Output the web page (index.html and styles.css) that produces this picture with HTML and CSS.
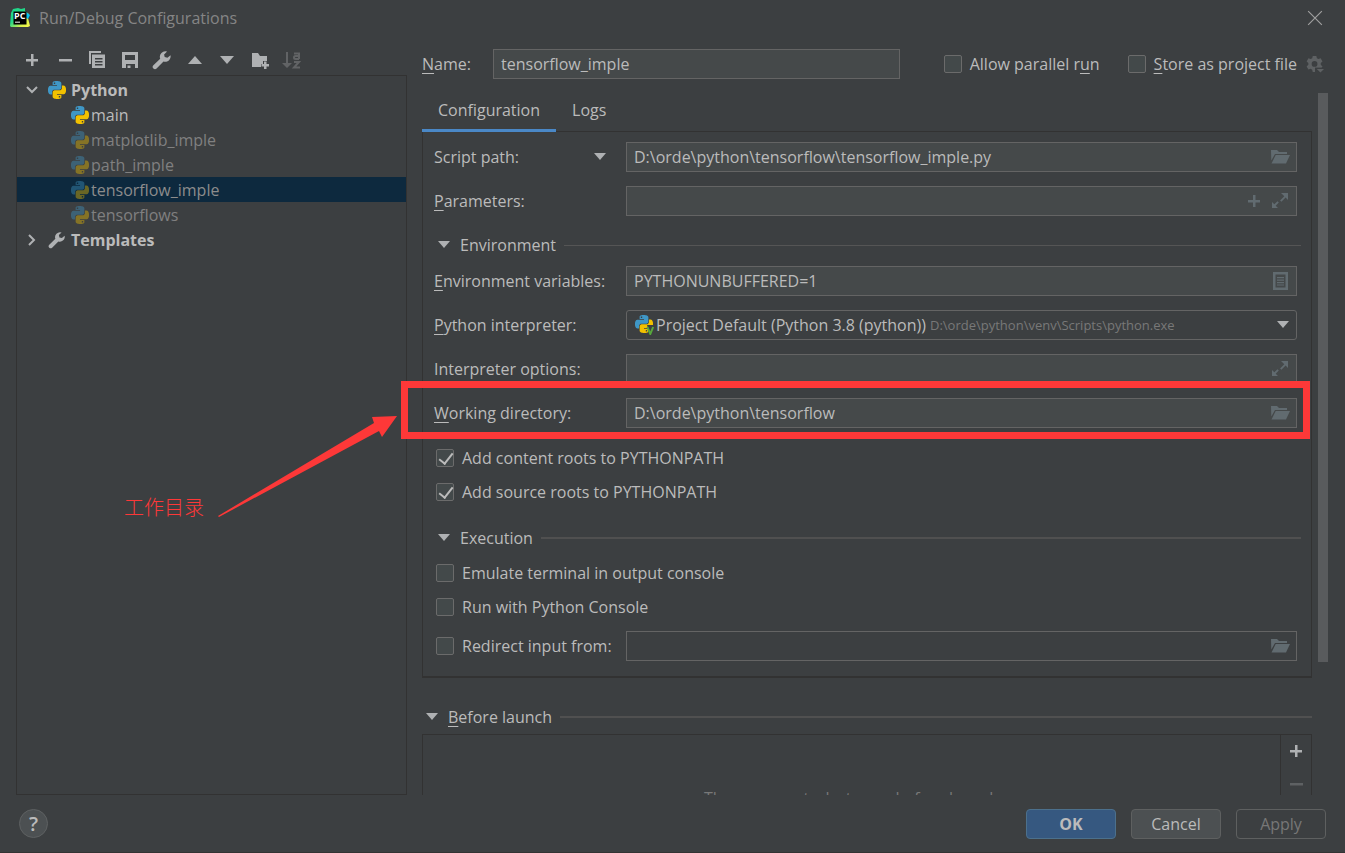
FILE: index.html
```html
<!DOCTYPE html>
<html lang="en">
<head>
<meta charset="utf-8">
<title>Run/Debug Configurations</title>
<link rel="stylesheet" href="styles.css">
</head>
<body>
<svg class="sprite" aria-hidden="true">
  <symbol id="python" viewBox="0 0 24 24">
    <path fill="#3f97c6" d="M14.25.18l.9.2.73.26.59.3.45.32.34.34.25.34.16.33.1.3.04.26.02.2-.01.13V8.5l-.05.63-.13.55-.21.46-.26.38-.3.31-.33.25-.35.19-.35.14-.33.1-.3.07-.26.04-.21.02H8.77l-.69.05-.59.14-.5.22-.41.27-.33.32-.27.35-.2.36-.15.37-.1.35-.07.32-.04.27-.02.21v3.06H3.17l-.21-.03-.28-.07-.32-.12-.35-.18-.36-.26-.36-.36-.35-.46-.32-.59-.28-.73-.21-.88-.14-1.05-.05-1.23.06-1.22.16-1.04.24-.87.32-.71.36-.57.4-.44.42-.33.42-.24.4-.16.36-.1.32-.05.24-.01h.16l.06.01h8.16v-.83H6.18l-.01-2.75-.02-.37.05-.34.11-.31.17-.28.25-.26.31-.23.38-.2.44-.18.51-.15.58-.12.64-.1.71-.06.77-.04.84-.02 1.27.05zm-6.3 1.98l-.23.33-.08.41.08.41.23.34.33.22.41.09.41-.09.33-.22.23-.34.08-.41-.08-.41-.23-.33-.33-.22-.41-.09-.41.09z"/>
    <path fill="#f2c100" d="M21.04 6.11l.28.06.32.12.35.18.36.27.36.35.35.47.32.59.28.73.21.88.14 1.04.05 1.23-.06 1.23-.16 1.04-.24.86-.32.71-.36.57-.4.45-.42.33-.42.24-.4.16-.36.09-.32.05-.24.02-.16-.01h-8.22v.82h5.84l.01 2.76.02.36-.05.34-.11.31-.17.29-.25.25-.31.24-.38.2-.44.17-.51.15-.58.13-.64.09-.71.07-.77.04-.84.01-1.27-.04-1.07-.14-.9-.2-.73-.25-.59-.3-.45-.33-.34-.34-.25-.34-.16-.33-.1-.3-.04-.25-.02-.2.01-.13v-5.34l.05-.64.13-.54.21-.46.26-.38.3-.32.33-.24.35-.2.35-.14.33-.1.3-.06.26-.04.21-.02.13-.01h5.84l.69-.05.59-.14.5-.21.41-.28.33-.32.27-.35.2-.36.15-.36.1-.35.07-.32.04-.28.02-.21V6.07h2.09l.14.01zm-6.47 14.25l-.23.33-.08.41.08.41.23.33.33.23.41.08.41-.08.33-.23.23-.33.08-.41-.08-.41-.23-.33-.33-.23-.41-.08-.41.08z"/>
  </symbol>
  <symbol id="plus" viewBox="0 0 20 20"><path d="M9 4h2.500v5H16v2.500h-4.500V16H9v-4.500H4V9h5z"/></symbol>
  <symbol id="minus" viewBox="0 0 20 20"><path d="M4 9h13v2.500H4z"/></symbol>
  <symbol id="wrench" viewBox="0 0 20 20"><path d="M18.500 5.200l-3.100 2.600-2.700-.700-.600-2.700 3-2.800a5.500 5.500 0 0 0-6.900 7.100L1.400 15.300a2.100 2.100 0 0 0 3.200 3.200l6.900-6.900a5.500 5.500 0 0 0 7-6.400z"/></symbol>
  <symbol id="down" viewBox="0 0 20 20"><path d="M4 6h12l-6 7z"/></symbol>
  <symbol id="folder" viewBox="0 0 20 20"><path d="M1 3h6l2 2h8v2H5L1.300 13.500z"/><path d="M5.700 8H20l-4 8.500H1.500z"/></symbol>
  <symbol id="expand" viewBox="0 0 20 20"><path d="M11 2h7v7l-2.400-2.400-4.200 4.200-1.300-1.300 4.200-4.200zM2 11l2.300 2.300 3.200-3.100 1.300 1.300-3.100 3.200L8 17H2z"/></symbol>
</svg>

<div class="dialog">
  <header class="titlebar">
    <svg class="logo" viewBox="0 0 20 20" aria-hidden="true">
      <defs><linearGradient id="pc" x1="0" y1="0" x2="1" y2="1"><stop offset="0.400" stop-color="#21d789"/><stop offset="0.750" stop-color="#d9f04b"/><stop offset="1" stop-color="#fcf84a"/></linearGradient></defs>
      <path fill="url(#pc)" d="M1 5l2-4 5-1 3 1 4-1v3l4 3-1 4 2 8-2 1H1l-1-1z"/>
      <path fill="#07c3f2" d="M16 4l4 3-2 4-2-1z"/>
      <path d="M3.500 3.500h13v13h-13z"/>
      <text x="4" y="11" class="logo-text">PC</text>
      <path fill="#aaaaaa" d="M5 13.500h5V15H5z"/>
    </svg>
    <h1 class="title">Run/Debug Configurations</h1>
    <button class="close" aria-label="Close"><svg viewBox="0 0 14 14" aria-hidden="true"><path d="M1 1l12 12M13 1L1 13"/></svg></button>
  </header>

  <main class="main">
    <aside class="sidebar">
      <div class="toolbar">
        <button aria-label="Add"><svg><use href="#plus"/></svg></button>
        <button aria-label="Remove"><svg><use href="#minus"/></svg></button>
        <button aria-label="Copy"><svg viewBox="0 0 20 20"><path d="M2 1h12v2H4v11H2z"/><path fill-rule="evenodd" d="M5 4.500h13V18H5zM8 8v1.500h7.500V8zm0 3v1.500h7.500V11zm0 3v1.500h7.500V14z"/></svg></button>
        <button aria-label="Save"><svg viewBox="0 0 20 20"><path fill-rule="evenodd" d="M2 2h16v16h-3v-4H6v4H2zm3 3v5h10V5z"/><path d="M7.500 15.500h3V18h-3z"/></svg></button>
        <button aria-label="Edit templates"><svg><use href="#wrench"/></svg></button>
        <button aria-label="Move up"><svg viewBox="0 0 20 20"><path d="M3 14h14l-7-8z"/></svg></button>
        <button aria-label="Move down"><svg viewBox="0 0 20 20"><path d="M3 6h14l-7 8z"/></svg></button>
        <button aria-label="Create folder"><svg viewBox="0 0 20 20"><path d="M2 3h6l2 3h7v5h-4v3h-2v3H2z"/><path d="M14 11.500h2.500V14H19v2.500h-2.500V19H14v-2.500h-2.500V14H14z"/></svg></button>
        <button aria-label="Sort" disabled><svg viewBox="0 0 20 20"><path d="M4 2h2v11h4l-5 5-5-5h4z"/><path class="stroke" d="M12 3.500h5V9M17 6h-3.500a1.500 1.500 0 0 0 0 3H17M12 12h5l-5 5.500h6"/></svg></button>
      </div>
      <ul class="tree">
        <li class="node root"><svg class="chevron" viewBox="0 0 12 12"><path d="M1 3l5 5 5-5"/></svg><svg class="icon"><use href="#python"/></svg><span>Python</span></li>
        <li class="node child active"><svg class="icon"><use href="#python"/></svg><span>main</span></li>
        <li class="node child"><svg class="icon"><use href="#python"/></svg><span>matplotlib_imple</span></li>
        <li class="node child"><svg class="icon"><use href="#python"/></svg><span>path_imple</span></li>
        <li class="node child selected"><svg class="icon"><use href="#python"/></svg><span>tensorflow_imple</span></li>
        <li class="node child"><svg class="icon"><use href="#python"/></svg><span>tensorflows</span></li>
        <li class="node root"><svg class="chevron" viewBox="0 0 12 12"><path d="M3 1l5 5-5 5"/></svg><svg class="icon gray"><use href="#wrench"/></svg><span>Templates</span></li>
      </ul>
    </aside>

    <section class="editor">
      <div class="name-row">
        <label class="name-label" for="name"><u>N</u>ame:</label>
        <div class="field name-field"><input id="name" type="text" value="tensorflow_imple"></div>
        <label class="check"><input type="checkbox"><span>Allow parallel r<u>u</u>n</span></label>
        <label class="check"><input type="checkbox"><span><u>S</u>tore as project file</span></label>
        <button class="gear" aria-label="Storage options" disabled><svg viewBox="0 0 20 20"><path fill-rule="evenodd" d="M7.500 1h4l.6 2.500 1.700 1 2.500-.8 2 3.400-1.900 1.800v2l1.900 1.800-2 3.400-2.500-.8-1.700 1-.6 2.500h-4l-.6-2.500-1.700-1-2.500.8-2-3.400 1.900-1.800v-2L.7 7.100l2-3.400 2.500.8 1.700-1zM9.500 6.700a3.200 3.200 0 1 0 0 6.400 3.200 3.200 0 0 0 0-6.400z"/><path class="notch" d="M10 14h10v6H10z"/><path d="M12 15.500h8L16 19.500z"/></svg></button>
      </div>

      <div class="scroll">
        <div class="content">
          <div class="tabs" role="tablist">
            <button class="tab current" role="tab" aria-selected="true">Configuration</button>
            <button class="tab" role="tab" aria-selected="false">Logs</button>
          </div>
          <div class="panel">
            <div class="row">
              <label for="script">Script path:</label>
              <svg class="mark switch"><use href="#down"/></svg>
              <div class="field"><input id="script" type="text" value="D:\orde\python\tensorflow\tensorflow_imple.py"><button aria-label="Browse"><svg><use href="#folder"/></svg></button></div>
            </div>
            <div class="row">
              <label for="params"><u>P</u>arameters:</label>
              <div class="field"><input id="params" type="text"><button aria-label="Insert macro"><svg><use href="#plus"/></svg></button><button aria-label="Expand"><svg><use href="#expand"/></svg></button></div>
            </div>
            <h2 class="section environment"><svg class="mark"><use href="#down"/></svg><span>Environment</span></h2>
            <div class="row">
              <label for="env"><u>E</u>nvironment variables:</label>
              <div class="field"><input id="env" type="text" value="PYTHONUNBUFFERED=1"><button aria-label="Edit variables"><svg viewBox="0 0 20 20"><path fill-rule="evenodd" d="M3 1h15v18H3zm2.500 2.500v13h10v-13z"/><path d="M7 6h7v1.300H7zm0 2.500h7v1.300H7zM7 11h7v1.300H7zm0 2.500h7v1H7z"/></svg></button></div>
            </div>
            <div class="row">
              <label for="interp"><u>P</u>ython interpreter:</label>
              <div class="field combo">
                <svg class="interp-icon" viewBox="0 0 20 20"><use href="#python" x="1" width="18" height="18"/><path class="venv-gap" d="M13 10h7v10h-4z"/><path class="venv" d="M13.500 12l2.800 7 2.800-7"/></svg>
                <select id="interp"><option>Project Default (Python 3.8 (python))</option></select>
                <span class="path">D:\orde\python\venv\Scripts\python.exe</span>
                <svg class="mark"><use href="#down"/></svg>
              </div>
            </div>
            <div class="row">
              <label for="opts">Interpreter options:</label>
              <div class="field"><input id="opts" type="text"><button aria-label="Expand"><svg><use href="#expand"/></svg></button></div>
            </div>
            <div class="row">
              <label for="wd"><u>W</u>orking directory:</label>
              <div class="field"><input id="wd" type="text" value="D:\orde\python\tensorflow"><button aria-label="Browse"><svg><use href="#folder"/></svg></button></div>
            </div>
            <div class="checks">
              <label class="check"><input type="checkbox" checked><span>Add content roots to PYTHONPATH</span></label>
              <label class="check"><input type="checkbox" checked><span>Add source roots to PYTHONPATH</span></label>
            </div>
            <h2 class="section thick"><svg class="mark"><use href="#down"/></svg><span>Execution</span></h2>
            <label class="check"><input type="checkbox"><span>Emulate terminal in output console</span></label>
            <label class="check"><input type="checkbox"><span>Run with Python Console</span></label>
            <div class="row">
              <label class="check"><input type="checkbox"><span>Redirect input from:</span></label>
              <div class="field off"><input type="text" aria-label="Input file" disabled><button aria-label="Browse" disabled><svg><use href="#folder"/></svg></button></div>
            </div>
          </div>

          <h2 class="section thick launch"><svg class="mark"><use href="#down"/></svg><span><u>B</u>efore launch</span></h2>
          <div class="tasks">
            <p class="empty">There are no tasks to run before launch</p>
            <div class="task-tools">
              <button aria-label="Add task"><svg><use href="#plus"/></svg></button>
              <button aria-label="Remove task" disabled><svg><use href="#minus"/></svg></button>
            </div>
          </div>
        </div>
        <div class="scrollbar"><div class="thumb"></div></div>
      </div>
    </section>
  </main>

  <footer class="footer">
    <button class="help" aria-label="Help">?</button>
    <button class="btn primary">OK</button>
    <button class="btn">Cancel</button>
    <button class="btn" disabled>Apply</button>
  </footer>

  <div class="callout-box"></div>
  <svg class="callout-arrow" viewBox="0 0 180 102" aria-hidden="true"><path d="M0 100l156-93-2-6 25-1-15 21-3-6L1 101z"/></svg>
  <p class="callout-text" lang="zh">工作目录</p>
</div>
</body>
</html>
```

FILE: styles.css
```css
* { box-sizing: border-box; }

body {
  margin: 0;
  background: #3c3f41;
  color: #bbbbbb;
  font: 16px/22px "Open Sans", "Noto Sans CJK SC", sans-serif;
}

button, input, select { font: inherit; color: inherit; }
button { padding: 0; border: 0; background: none; }
h1, h2, p, ul { margin: 0; padding: 0; font-size: 16px; font-weight: 400; }
u { text-decoration-thickness: 1px; text-underline-offset: 3px; }
svg { display: block; fill: currentColor; }
.sprite { position: absolute; width: 0; height: 0; }

.dialog {
  position: relative;
  display: flex;
  flex-direction: column;
  height: 100vh;
  border-bottom: 1px solid #333333;
  overflow: hidden;
}

/* Title bar */
.titlebar {
  display: flex;
  align-items: center;
  gap: 9px;
  height: 36px;
  padding: 0 22px 0 10px;
}
.logo { width: 20px; height: 20px; fill: #000000; }
.logo-text { font: bold 9px "Open Sans", sans-serif; fill: #ffffff; }
.title { flex: 1; color: #858585; }
.close svg { width: 16px; height: 16px; fill: none; stroke: #a0a0a0; }

/* Two columns */
.main { display: flex; flex: 1; gap: 15px; min-height: 0; padding: 0 17px 0 16px; }
.sidebar { display: flex; flex-direction: column; width: 391px; flex: none; }
.toolbar {
  display: flex;
  align-items: center;
  justify-content: space-between;
  width: 280px;
  height: 39px;
  margin-left: 6px;
  padding-top: 9px;
  color: #afb1b3;
}
.toolbar svg { width: 20px; height: 20px; }
.toolbar button:disabled { color: #616365; }
.stroke { fill: none; stroke: currentColor; stroke-width: 2; }

.tree {
  flex: 1;
  border: 1px solid #323232;
  list-style: none;
  padding-top: 1px;
}
.node { display: flex; align-items: center; height: 25px; }
.root { gap: 5px; padding-left: 9px; font-weight: 700; }
.child { gap: 2px; padding-left: 54px; color: #808080; }
.child.active { color: #bbbbbb; }
.child.selected { background: #0d293e; color: #8c8c8c; }
.child .icon { opacity: 0.4; }
.child.active .icon { opacity: 1; }
.icon { width: 18px; height: 18px; }
.icon.gray { color: #afb1b3; }
.chevron { width: 12px; height: 12px; margin-right: 5px; fill: none; stroke: #afb1b3; stroke-width: 2; }

/* Editor */
.editor { display: flex; flex: 1; flex-direction: column; min-width: 0; }
.name-row { display: flex; align-items: center; height: 57px; padding: 13px 4px 14px 0; }
.name-label { width: 71px; }
.name-field { flex: 1; margin-right: 16px; }
.name-row .check { margin-left: 28px; }
.gear { margin-left: 9px; color: #5e6163; }
.gear svg { width: 18px; height: 18px; }
.notch { fill: #3c3f41; }

.field {
  display: flex;
  align-items: center;
  gap: 6px;
  min-width: 0;
  height: 30px;
  padding: 0 6px 0 7px;
  border: 1px solid #646464;
  background: #45494a;
}
.field input { flex: 1; min-width: 0; padding: 0; border: 0; outline: 0; background: none; }
.field button { color: #616b70; }
.field button svg { width: 20px; height: 20px; }
.field.off { background: none; }

.check { display: flex; align-items: center; gap: 8px; height: 20px; }
.check input {
  width: 18px;
  height: 18px;
  margin: 0;
  border: 1px solid #6b6b6b;
  border-radius: 2px;
  background: #43494a;
  appearance: none;
}
.check input:checked::after {
  content: "";
  display: block;
  width: 6px;
  height: 12px;
  margin: 0 0 0 5px;
  border: solid #bbbbbb;
  border-width: 0 2px 2px 0;
  transform: rotate(38deg);
}

.scroll { display: flex; flex: 1; gap: 6px; min-height: 0; overflow: hidden; }
.content { flex: 1; min-width: 0; }
.scrollbar { width: 10px; }
.thumb { height: 81%; background: #595b5d; }

.tabs { display: flex; height: 38px; }
.tab { height: 39px; padding: 0 16px 3px; border-bottom: 3px solid transparent; }
.tab.current { border-color: #4a88c7; }

.panel {
  display: flex;
  flex-direction: column;
  gap: 14px;
  padding: 10px 14px 15px 11px;
  border: 1px solid #323232;
  border-bottom-width: 2px;
}
.row { display: flex; align-items: center; }
.row > :first-child { width: 192px; flex: none; }
.row > .field { flex: 1; }
.row > .check, .panel > .check { padding-left: 2px; }
.mark { width: 20px; height: 20px; flex: none; color: #afb1b3; }
.switch { margin: 0 16px 0 -36px; }

.section { display: flex; align-items: center; gap: 6px; height: 22px; margin-right: -4px; }
.section::after { content: ""; flex: 1; height: 1px; margin-left: 2px; background: #555555; }
.section.thick::after { height: 2px; background: #505050; }
.section.environment { margin-top: 4px; margin-bottom: -4px; }
.panel .section.thick { margin-top: 11px; }
.checks { display: grid; gap: 14px; margin-top: 6px; padding-left: 2px; }

.combo { gap: 2px; border-radius: 3px; background: none; padding-right: 3px; }
.combo select { border: 0; padding: 0; outline: 0; background: none; appearance: none; }
.combo .path { flex: 1; padding-left: 2px; color: #787878; font-size: 13px; }
.interp-icon { width: 20px; height: 20px; }
.venv { fill: none; stroke: #57a83c; stroke-width: 2; }
.venv-gap { fill: #3c3f41; }

.section.launch { margin: 28px 0 6px; }
.tasks { display: flex; height: 150px; border: 1px solid #323232; }
.empty { flex: 1; padding-top: 52px; color: #787878; text-align: center; }
.task-tools {
  display: flex;
  flex-direction: column;
  gap: 13px;
  width: 31px;
  padding: 6px 5px;
  border-left: 1px solid #323232;
  color: #afb1b3;
}
.task-tools svg { width: 20px; height: 20px; }
.task-tools button:disabled { color: #5e6163; }

/* Footer */
.footer { display: flex; align-items: center; gap: 15px; height: 57px; padding: 0 19px; }
.help {
  width: 29px;
  height: 29px;
  margin-right: auto;
  border: 1px solid #5e6162;
  border-radius: 50%;
  background: #4c5052;
  font-size: 20px;
  font-weight: 600;
}
.btn {
  width: 90px;
  height: 30px;
  border: 1px solid #5e6060;
  border-radius: 4px;
  background: #4c5052;
}
.btn.primary { border-color: #4c708c; background: #365880; font-weight: 700; }
.btn:disabled { background: none; color: #777777; }

/* Annotation lying over the dialog */
.callout-box {
  position: absolute;
  top: 381px;
  right: 35px;
  left: 401px;
  height: 58px;
  border: 7px solid #fd3838;
  pointer-events: none;
}
.callout-arrow { position: absolute; top: 416px; left: 218px; width: 180px; height: 102px; fill: #fd3838; }
.callout-text {
  position: absolute;
  top: 495px;
  left: 124px;
  color: #fd3838;
  font: 300 20px/24px "Noto Sans CJK SC", sans-serif;
}
```
